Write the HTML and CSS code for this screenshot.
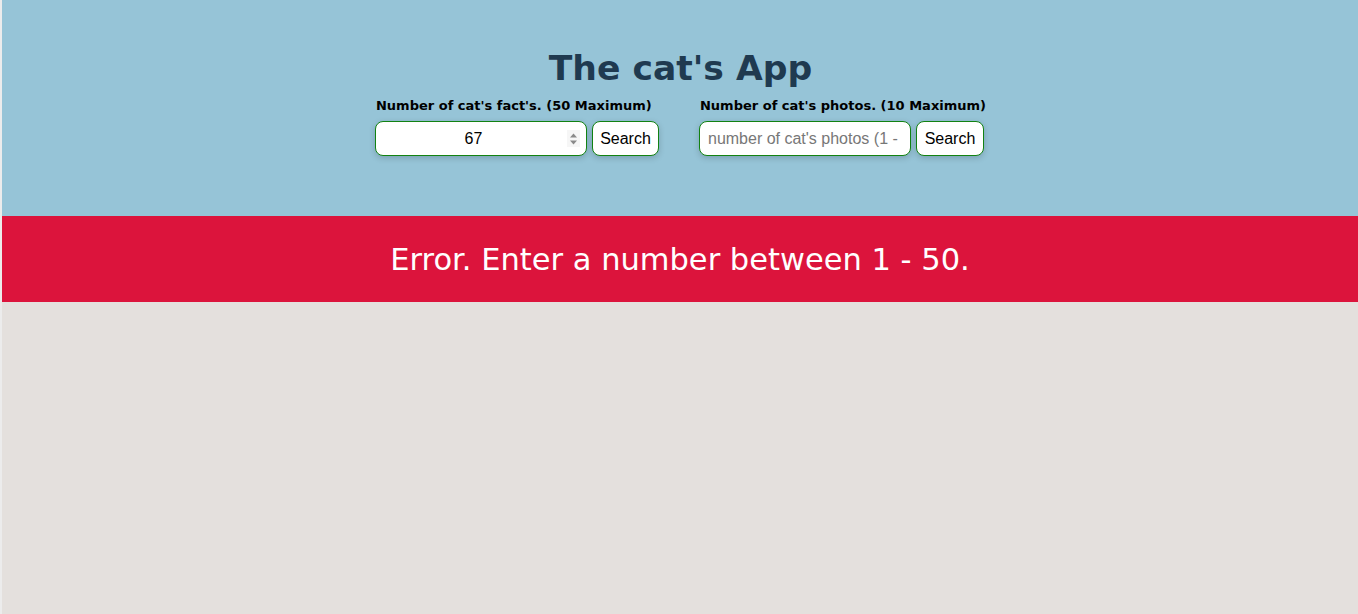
FILE: index.html
```html
<!DOCTYPE html>
<html lang="en">
<head>
<meta charset="utf-8">
<title>The cat's App</title>
<link rel="stylesheet" href="styles.css">
</head>
<body>
<div class="page">
  <header class="header">
    <h1 class="title">The cat's App</h1>
    <div class="forms">
      <form class="group">
        <label class="label" for="facts">Number of cat's fact's. (50 Maximum)</label>
        <div class="row">
          <div class="num-wrap">
            <input class="field field-num" id="facts" type="number" value="67">
            <span class="spinner" aria-hidden="true">
              <svg width="9" height="16" viewBox="0 0 9 16"><path d="M1 6.5 L4.5 2.5 L8 6.5 Z" fill="#8a8a8a"/><path d="M1 9.5 L4.5 13.5 L8 9.5 Z" fill="#8a8a8a"/></svg>
            </span>
          </div>
          <button class="btn" type="button">Search</button>
        </div>
      </form>
      <form class="group">
        <label class="label" for="photos">Number of cat's photos. (10 Maximum)</label>
        <div class="row">
          <input class="field" id="photos" type="text" placeholder="number of cat's photos (1 - 10)">
          <button class="btn btn-wide" type="button">Search</button>
        </div>
      </form>
    </div>
  </header>
  <div class="error">Error. Enter a number between 1 - 50.</div>
  <main class="content"></main>
</div>
</body>
</html>
```
FILE: styles.css
```css
html, body {
  margin: 0;
  height: 100%;
}
body {
  background: #ececec;
  padding-left: 2px;
  box-sizing: border-box;
  font-family: "DejaVu Sans", Verdana, sans-serif;
}
.page {
  display: flex;
  flex-direction: column;
  height: 100%;
  background: #e4e0dd;
}
.header {
  background: #96c4d7;
  height: 216px;
  box-sizing: border-box;
  padding-top: 47px;
  display: flex;
  flex-direction: column;
  align-items: center;
}
.title {
  margin: 0 0 0 1px;
  font-size: 34.6px;
  line-height: 42px;
  font-weight: bold;
  color: #1f3a50;
}
.forms {
  display: flex;
  gap: 40px;
  margin-top: 9px;
  padding-left: 1px;
}
.group {
  display: flex;
  flex-direction: column;
  margin: 0;
}
.label {
  font-size: 13px;
  line-height: 16px;
  font-weight: bold;
  color: #000;
  padding-left: 1px;
}
.row {
  display: flex;
  gap: 5px;
  margin-top: 7px;
}
.num-wrap {
  position: relative;
  display: flex;
}
.field {
  width: 212px;
  height: 35px;
  box-sizing: border-box;
  border: 1px solid #128212;
  border-radius: 8px;
  background: #fff;
  padding: 0 8px;
  font-family: "Liberation Sans", Arial, sans-serif;
  font-size: 16px;
  color: #000;
  box-shadow: 0 2px 6px rgba(0, 0, 0, 0.18);
  outline: none;
}
.field::placeholder {
  color: #777;
}
.field-num {
  text-align: center;
  padding-right: 23px;
  -moz-appearance: textfield;
}
.field-num::-webkit-inner-spin-button,
.field-num::-webkit-outer-spin-button {
  -webkit-appearance: none;
  margin: 0;
}
.spinner {
  position: absolute;
  right: 7px;
  top: 9px;
  width: 13px;
  height: 17px;
  background: #f6f6f6;
  display: flex;
  align-items: center;
  justify-content: center;
}
.btn {
  width: 67px;
  height: 35px;
  box-sizing: border-box;
  padding: 0;
  border: 1px solid #128212;
  border-radius: 8px;
  background: #fff;
  font-family: "Liberation Sans", Arial, sans-serif;
  font-size: 16px;
  color: #000;
  box-shadow: 0 2px 6px rgba(0, 0, 0, 0.18);
}
.btn-wide {
  width: 68px;
}
.error {
  background: #dc143c;
  color: #fff;
  height: 86px;
  display: flex;
  align-items: center;
  justify-content: center;
  font-size: 30.5px;
  padding-top: 1px;
  box-sizing: border-box;
}
.content {
  flex: 1;
}
```
